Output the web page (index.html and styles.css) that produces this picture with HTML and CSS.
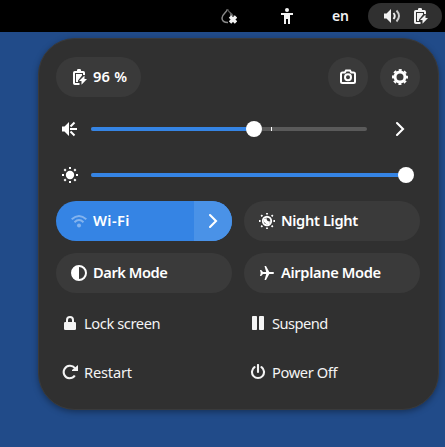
FILE: index.html
```html
<!DOCTYPE html>
<html lang="en">
<head>
<meta charset="utf-8">
<title>Quick Settings</title>
<link rel="stylesheet" href="styles.css">
</head>
<body>
<svg class="defs" width="0" height="0" aria-hidden="true">
  <symbol id="battery" viewBox="0 0 16 16">
    <path d="M5 2V1.200Q5 0 6.200 0h1.600Q9 0 9 1.200V2h2.200Q13 2 13 3.800V6h-2V4H3v10h4.500v2H2.800Q1 16 1 14.200V3.800Q1 2 2.800 2Z"/>
    <path d="M4 5h6v1.500L6 11.500V13H4Z"/>
    <path d="M12.500 6.500V10H15L9.500 15.800V12H7Z"/>
  </symbol>
  <symbol id="chevron" viewBox="0 0 16 16"><path d="M5 2l6 6-6 6" fill="none" stroke="currentColor" stroke-width="2.100" stroke-linecap="round"/></symbol>
</svg>
<header class="topbar">
  <svg class="icon drop" viewBox="0 0 16 16">
    <path d="M6.500 1C6 4.500 1 6 1 10c0 3 2.500 4.500 6 4.500" fill="none" stroke="#888" stroke-width="1.500"/>
    <path d="M6.500 1C7 4 10 5 11.500 7" fill="none" stroke="#555" stroke-width="1.400"/>
    <path d="M9 4l4 4H9Z" fill="#666"/>
    <path d="M9 8.500l6 6m0-6l-6 6" stroke="#f2f2f2" stroke-width="3.400" fill="none"/>
  </svg>
  <svg class="icon person" viewBox="0 0 16 16"><circle cx="8" cy="2" r="2"/><path d="M2 5h12v2h-3v9H9v-5H7v5H5V7H2Z"/></svg>
  <span class="lang">en</span>
  <div class="status">
    <svg class="icon" viewBox="0 0 16 16"><path d="M0 5.500h2.500L7 1v14l-4.500-4.500H0Z"/><path d="M9.500 5Q12 8 9.500 11" fill="none" stroke="currentColor" stroke-width="1.900"/><path d="M12.500 2.500Q17.500 8 12.500 13.500" fill="none" stroke="#ccc" stroke-width="1.900"/></svg>
    <svg class="icon"><use href="#battery"/></svg>
  </div>
</header>
<main class="panel">
  <div class="header">
    <button class="pill"><svg class="icon battery"><use href="#battery"/></svg><span class="percent">96 %</span></button>
    <button class="round"><svg class="icon" viewBox="0 0 16 16"><path d="M2.500 3.500h2.300L6 1.500h4l1.200 2h2.300Q15 3.500 15 5v7.500Q15 14 13.500 14h-11Q1 14 1 12.500V5q0-1.500 1.500-1.500Z" fill="none" stroke="currentColor" stroke-width="2"/><circle cx="8" cy="8.300" r="3" fill="none" stroke="currentColor" stroke-width="2"/></svg></button>
    <button class="round"><svg class="icon" viewBox="0 0 16 16"><circle cx="8" cy="8" r="5" fill="none" stroke="currentColor" stroke-width="3"/><circle cx="8" cy="8" r="7" fill="none" stroke="currentColor" stroke-width="2" stroke-dasharray="3 2.498" stroke-dashoffset="1.500"/></svg></button>
  </div>
  <div class="slider-row">
    <svg class="icon" viewBox="0 0 16 16"><path d="M0 5.500h2.500L7 1v14l-4.500-4.500H0Z"/><path d="M8.500 5.500l4-4M8 8h7M8.500 10.500l4 4" fill="none" stroke="currentColor" stroke-width="2"/></svg>
    <div class="track volume"><div class="fill"></div><i class="tick"></i></div>
    <svg class="icon arrow"><use href="#chevron"/></svg>
  </div>
  <div class="slider-row">
    <svg class="icon" viewBox="0 0 16 16"><circle cx="8" cy="8" r="4.200"/><path d="M8 0v2M8 14v2M0 8h2M14 8h2M2.300 2.300l1.500 1.500M12.200 12.200l1.500 1.500M2.300 13.700l1.500-1.500M12.200 3.800l1.500-1.500" stroke="currentColor" stroke-width="2"/></svg>
    <div class="track brightness"><div class="fill"></div></div>
  </div>
  <div class="tiles">
    <div class="tile active">
      <svg class="icon wifi" viewBox="0 0 16 16"><circle cx="8" cy="12.500" r="2"/><path d="M.7 6.300Q8-.5 15.300 6.300M3.500 9.200Q8 5 12.500 9.200" fill="none" stroke="currentColor" stroke-width="1.900"/></svg><span class="t-wifi">Wi-Fi</span>
      <div class="expand"><svg class="icon"><use href="#chevron"/></svg></div>
    </div>
    <div class="tile"><svg class="icon" viewBox="0 0 16 16"><circle cx="8" cy="8" r="4.200" fill="none" stroke="currentColor" stroke-width="1.900"/><path d="M7.500 5Q7.500 8.500 11 8.500L10.500 11H7L5 9V6Z"/><path d="M8 0v1.600M8 14.400V16M0 8h1.600M14.400 8H16M2.200 2.200l1.200 1.200M12.600 12.600l1.200 1.200M2.200 13.800l1.200-1.200M12.600 3.400l1.200-1.200" stroke="currentColor" stroke-width="1.800"/></svg><span class="t-night">Night Light</span></div>
    <div class="tile"><svg class="icon" viewBox="0 0 16 16"><circle cx="8" cy="8" r="7" fill="none" stroke="currentColor" stroke-width="2"/><path d="M8 1a7 7 0 000 14Z"/></svg><span class="t-dark">Dark Mode</span></div>
    <div class="tile"><svg class="icon" viewBox="0 0 16 16"><path d="M1 5h1.200L4 7H7.200L5.500 1H7L10.300 7H14q1 0 1 1t-1 1h-3.700L7 15H5.500L7.200 9H4L2.200 11H1L1.700 8Z"/></svg><span class="t-air">Airplane Mode</span></div>
  </div>
  <div class="actions">
    <div class="action"><svg class="icon" viewBox="0 0 16 16"><path d="M5 8V5a3 3 0 016 0V8" fill="none" stroke="currentColor" stroke-width="2"/><rect x="2" y="7" width="12" height="8" rx="1.300"/></svg><span class="t-lock">Lock screen</span></div>
    <div class="action"><svg class="icon" viewBox="0 0 16 16"><rect x="2" y="1" width="5" height="14" rx=".8"/><rect x="9" y="1" width="5" height="14" rx=".8"/></svg><span class="t-suspend">Suspend</span></div>
    <div class="action"><svg class="icon" viewBox="0 0 16 16"><path d="M13 4.200A6.300 6.300 0 107.300 14.300c2.300 0 4.300-1 5.500-2.800" fill="none" stroke="currentColor" stroke-width="2.100"/><path d="M16 1v6h-6V6Z"/></svg><span class="t-restart">Restart</span></div>
    <div class="action"><svg class="icon" viewBox="0 0 16 16"><path d="M4.500 3.200a6 6 0 107 0M8 1v7" fill="none" stroke="currentColor" stroke-width="2.100" stroke-linecap="round"/></svg><span class="t-power">Power Off</span></div>
  </div>
</main>
</body>
</html>
```

FILE: styles.css
```css
* { box-sizing: border-box; }
body {
  margin: 0;
  width: 445px;
  height: 447px;
  overflow: hidden;
  background: #214b89;
  color: #fff;
  font: 14.67px/20px "Noto Sans", sans-serif;
}
.defs { display: block; height: 0; }
.icon { display: block; width: 16px; height: 16px; flex: none; fill: currentColor; }
button { border: 0; padding: 0; color: inherit; font: inherit; }
.topbar {
  display: flex;
  align-items: center;
  height: 32px;
  background: #000;
  color: #f2f2f2;
  padding: 0 3px 0 221px;
}
.person { margin-left: 42px; }
.lang { margin-left: 37px; width: 18px; font-weight: 600; font-size: 14px; letter-spacing: -.3px; }
.status {
  display: flex;
  align-items: center;
  gap: 13px;
  width: 74px;
  height: 26px;
  margin-left: auto;
  padding-left: 16px;
  border-radius: 13px;
  background: #303030;
}
.panel {
  width: 401px;
  height: 372px;
  margin: 6px 0 0 38px;
  padding: 18px 18px 0 17px;
  border: 1px solid #3a3a3a;
  border-radius: 37px;
  background: #303030;
  box-shadow: 0 2px 6px rgba(0, 0, 0, .35);
}
.header { display: flex; gap: 12px; width: 364px; }
.pill, .round, .tile { background: #3a3a3a; border-radius: 20px; height: 40px; }
.pill {
  display: flex;
  align-items: center;
  gap: 5px;
  width: 85px;
  padding-left: 16px;
  margin-right: auto;
  font-weight: 600;
}
.round { display: flex; align-items: center; justify-content: center; width: 40px; }
.slider-row { display: flex; align-items: center; height: 32px; padding-left: 6px; margin-top: 16px; }
.slider-row + .slider-row { margin-top: 14px; }
.track { position: relative; flex: none; height: 4px; margin-left: 13px; border-radius: 2px; background: #5a5a5a; }
.volume { width: 276px; }
.brightness { width: 322px; }
.fill { position: relative; height: 4px; border-radius: 2px; background: #3584e4; }
.fill::after {
  content: "";
  position: absolute;
  right: -8px;
  top: -6px;
  width: 16px;
  height: 16px;
  border-radius: 50%;
  background: #fff;
}
.volume .fill { width: 163px; }
.brightness .fill { width: 315px; }
.tick { position: absolute; left: 180px; top: 0; width: 1px; height: 4px; background: #fff; }
.arrow { margin-left: 25px; }
.tiles { display: grid; grid-template-columns: 176px 176px; gap: 12px; margin-top: 10px; }
.tile { display: flex; align-items: center; gap: 6px; padding-left: 15px; font-weight: 600; overflow: hidden; }
.pill span, .tile span { padding-bottom: 2px; }
.active { background: #3584e4; }
.wifi { color: #83b3ee; }
.expand {
  display: flex;
  align-items: center;
  justify-content: center;
  width: 38px;
  height: 40px;
  margin-left: auto;
  background: #4a92e7;
}
.actions { display: grid; grid-template-columns: 176px 176px; column-gap: 12px; grid-auto-rows: 49px; margin-top: 5.5px; }
.action { display: flex; align-items: center; gap: 6px; padding-left: 6px; color: #f4f4f4; }
.percent { letter-spacing: .2px; }
.t-wifi { letter-spacing: .4px; }
.t-night, .t-air { letter-spacing: -.35px; }
.t-dark { letter-spacing: -.45px; }
.t-lock, .t-power { letter-spacing: -.4px; }
.t-suspend { letter-spacing: -.55px; }
.t-restart { letter-spacing: -.2px; }
```
